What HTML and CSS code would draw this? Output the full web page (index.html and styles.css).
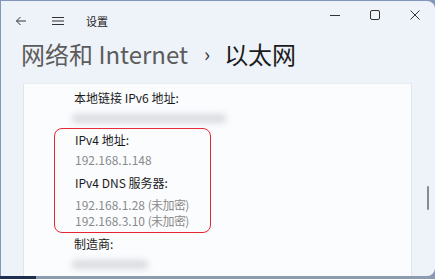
FILE: index.html
```html
<!DOCTYPE html>
<html lang="zh-CN">
<head>
    <meta charset="UTF-8">
    <title>设置</title>
    <link rel="stylesheet" href="styles.css">
</head>
<body>
    <div class="window">
        <div class="titlebar">
            <span class="tb-icon">
                <svg width="12" height="12" viewBox="0 0 12 12"><path d="M11 6H1.5M5.5 2L1.5 6l4 4" fill="none" stroke="#333" stroke-width="1"/></svg>
            </span>
            <span class="tb-icon">
                <svg width="14" height="12" viewBox="0 0 14 12"><path d="M1 2.5h12M1 6h12M1 9.5h12" fill="none" stroke="#333" stroke-width="1"/></svg>
            </span>
            <span class="app-title">设置</span>
            <div class="controls">
                <span class="ctl"><svg width="10" height="10" viewBox="0 0 10 10"><path d="M0 5.5h10" stroke="#333" stroke-width="1"/></svg></span>
                <span class="ctl"><svg width="10" height="10" viewBox="0 0 10 10"><rect x="0.5" y="0.5" width="9" height="9" rx="1.5" fill="none" stroke="#333" stroke-width="1"/></svg></span>
                <span class="ctl"><svg width="10" height="10" viewBox="0 0 10 10"><path d="M0.5 0.5l9 9M9.5 0.5l-9 9" stroke="#333" stroke-width="1"/></svg></span>
            </div>
        </div>

        <h1 class="breadcrumb">
            <span class="parent">网络和 Internet</span>
            <span class="chev">›</span>
            <span class="current">以太网</span>
        </h1>

        <div class="main">
            <div class="card">
                <div class="label">本地链接 IPv6 地址:</div>
                <div class="blur-row"><span class="blur wide"></span></div>

                <div class="highlight">
                    <div class="label">IPv4 地址:</div>
                    <div class="value">192.168.1.148</div>
                    <div class="label dns">IPv4 DNS 服务器:</div>
                    <div class="value small first">192.168.1.28 <span class="paren">(未加密)</span></div>
                    <div class="value small">192.168.3.10 <span class="paren">(未加密)</span></div>
                </div>

                <div class="label">制造商:</div>
                <div class="blur-row"><span class="blur short"></span></div>
            </div>
            <div class="gutter">
                <span class="thumb"></span>
            </div>
        </div>
    </div>
    <div class="taskbar"><span class="start"></span></div>
</body>
</html>
```

FILE: styles.css
```css
body {
    margin: 0;
    width: 435px;
    height: 279px;
    overflow: hidden;
    background: #8396bb;
    font-family: "Noto Sans CJK SC", "Noto Sans", sans-serif;
    color: #1b1b1b;
    position: relative;
}

.window {
    margin: 1px 0 0 1px;
    width: 434px;
    height: 275px;
    background: #eef2f9;
    border-radius: 0 8px 8px 0;
    overflow: hidden;
    display: flex;
    flex-direction: column;
}

.titlebar {
    height: 40px;
    display: flex;
    align-items: center;
    padding-left: 14px;
}

.tb-icon {
    width: 36px;
    display: flex;
    align-items: center;
}

.app-title {
    font-size: 11px;
    margin-left: -1px;
    color: #1b1b1b;
}

.controls {
    margin-left: auto;
    display: flex;
    align-self: flex-start;
    height: 27px;
    align-items: center;
}

.ctl {
    width: 40px;
    display: flex;
    justify-content: center;
}

.breadcrumb {
    margin: 0;
    height: 42px;
    padding-left: 20px;
    font-size: 24px;
    font-weight: normal;
    line-height: 26px;
    display: flex;
    align-items: flex-start;
}

.parent {
    color: #5c5c5c;
}

.chev {
    color: #333;
    font-size: 20px;
    margin: 0 14px 0 16px;
}

.current {
    color: #1b1b1b;
}

.main {
    flex: 1;
    display: flex;
}

.card {
    width: 389px;
    margin-left: 22px;
    background: #fbfcfe;
    border-left: 1px solid #e2e4e8;
    border-right: 1px solid #e2e4e8;
    border-top: 1px solid #e8ebf0;
    padding: 4px 0 0 30px;
    box-sizing: border-box;
}

.label {
    font-size: 12px;
    line-height: 20px;
    padding-left: 20px;
    color: #1b1b1b;
}

.value {
    font-size: 12px;
    line-height: 20px;
    padding-left: 20px;
    color: #8a8a8a;
}

.paren {
    letter-spacing: -0.6px;
}

.value.small {
    line-height: 16px;
}

.value.first {
    margin-top: 4px;
}

.label.dns {
    margin-top: 3px;
}

.blur-row {
    height: 20px;
    display: flex;
    align-items: center;
    padding-left: 18px;
}

.blur {
    display: block;
    height: 9px;
    background: #d9dbdf;
    border-radius: 4px;
    filter: blur(3px);
}

.blur.wide {
    width: 154px;
}

.blur.short {
    width: 76px;
}

.highlight {
    width: 157px;
    height: 105px;
    box-sizing: border-box;
    border: 1.5px solid #e5262e;
    border-radius: 8px;
    padding-top: 1px;
    margin: 0 0 1px 0;
}

.gutter {
    flex: 1;
    position: relative;
}

.thumb {
    position: absolute;
    left: 15px;
    top: 103px;
    width: 2px;
    height: 24px;
    background: #8a8a8a;
    border-radius: 1px;
}

.taskbar {
    position: absolute;
    left: 0;
    bottom: 0;
    width: 435px;
    height: 3px;
    background: #8d9bb1;
}

.start {
    display: block;
    width: 36px;
    height: 3px;
    background: #1f2d4f;
}
```
